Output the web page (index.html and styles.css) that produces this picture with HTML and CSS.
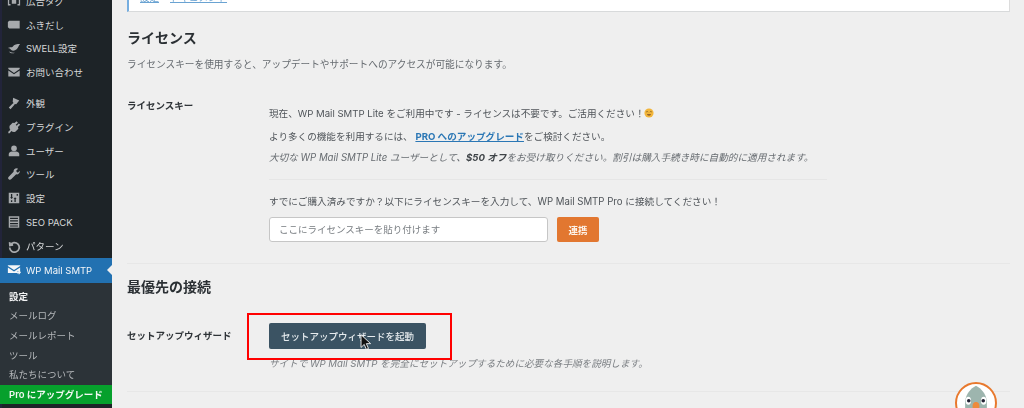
FILE: index.html
```html
<!DOCTYPE html>
<html lang="ja">
<head>
<meta charset="utf-8">
<title>WP Mail SMTP 設定</title>
<link rel="stylesheet" href="styles.css">
</head>
<body>
<div class="page">
  <aside class="sidebar">
    <ul class="menu">
      <li class="item item-clipped"><svg class="icon" viewBox="0 0 16 16"><path d="M1 3h3v1.500H2.500v7H4V13H1zM15 3h-3v1.500h1.500v7H12V13h3zM5.500 5h5v6h-5z"/></svg>広告タグ</li>
      <li class="item"><svg class="icon" viewBox="0 0 16 16"><path d="M2.500 3h12v9h-12l-1.500-1.500v-6z"/></svg>ふきだし</li>
      <li class="item"><svg class="icon" viewBox="0 0 16 16"><path d="M1 8c2 0 2.500 1 3.500 2 1.500 1.600 4.500 1.500 6.500-.5 2-2 2-4 4-6-3.500 0-7 .5-8.500 3C5.500 7.500 3 6.500 1 8zM2 12c2 2.500 5 2.500 7 1.500-2.500 0-4.500-.5-7-1.500z"/></svg>SWELL設定</li>
      <li class="item"><svg class="icon" viewBox="0 0 16 16"><path d="M1.500 3h13v1.500L8 9 1.500 4.500zM1.500 6.200 8 10.700l6.500-4.500V13h-13z"/></svg>お問い合わせ</li>
      <li class="item item-gap"><svg class="icon" viewBox="0 0 16 16"><path d="M7 2l7 3-3.500 4.500-1.500-.5-1 1.500L4 15l-2-2 4-4 1.500-1-1-1.500z"/></svg>外観</li>
      <li class="item"><svg class="icon" viewBox="0 0 16 16"><path d="M11 1.500l1.500 1.500-2.500 2.500 1 1 2.500-2.500L15 5.500l-2.500 2.500 .5 2-3.500 3.500c-2 .5-3.500 0-4.500-.8L3 15H1.500v-1.500l2.300-2.500c-.8-1-1.300-2.500-.8-4.500L6.500 3l2 .5z"/></svg>プラグイン</li>
      <li class="item"><svg class="icon" viewBox="0 0 16 16"><circle cx="8" cy="5" r="3.200"/><path d="M2 14v-2.500C2 9.500 4 8.500 5.500 8.500h5c1.500 0 3.500 1 3.500 3V14z"/></svg>ユーザー</li>
      <li class="item"><svg class="icon" viewBox="0 0 16 16"><path d="M11 1.500c-2 0-3.800 1.800-3.500 4L2 11c-1.200 1.200-.8 2.300 0 3 .8.800 2 .9 3-.2l5.500-5.400c2.300.5 4.400-1.400 4.200-4.100l-2.400 2.200-2-2 2.400-2.400c-.5-.3-1-.6-1.700-.6z"/></svg>ツール</li>
      <li class="item"><svg class="icon" viewBox="0 0 16 16"><path fill-rule="evenodd" d="M2 2h12v12H2zM4.500 3.500v3.500H3.500l1.800 2 1.700-2H6v-3.500zM10 12.500V9h1l-1.800-2-1.700 2h1v3.500zM11 3.500v2h1.500v-2zM4.500 10.500v2H6v-2z"/></svg>設定</li>
      <li class="item"><svg class="icon" viewBox="0 0 16 16"><path fill-rule="evenodd" d="M2 1.500h12v13H2zM3.500 3v1.500h9V3zM3.500 6v1.500h9V6zM3.500 9v1.500h9V9zM3.500 12v1h9v-1z"/></svg>SEO PACK</li>
      <li class="item"><svg class="icon icon-line" viewBox="0 0 16 16"><path d="M3 3.500 3.300 7.500 7 6.800M3.600 7A5.500 5.500 0 1 1 3 9.800"/></svg>パターン</li>
      <li class="item item-active"><svg class="icon icon-white" viewBox="0 0 16 16"><path d="M1 2.500h14v1L8 8 1 3.500zM1 5.200 8 9.700l7-4.500V9h-3v2.500H1zM12.500 9.500h1V8l2.500 2.700-2.500 2.800v-1.500h-2z"/></svg>WP Mail SMTP</li>
    </ul>
    <ul class="submenu">
      <li class="sub sub-current">設定</li>
      <li class="sub">メールログ</li>
      <li class="sub">メールレポート</li>
      <li class="sub">ツール</li>
      <li class="sub">私たちについて</li>
      <li class="sub sub-pro">Pro にアップグレード</li>
    </ul>
  </aside>

  <main class="main">
    <div class="notice"><span class="notice-links"><a>設定</a><a>ドキュメント</a></span></div>

    <section class="section section-license">
      <h2 class="heading">ライセンス</h2>
      <p class="desc">ライセンスキーを使用すると、アップデートやサポートへのアクセスが可能になります。</p>
      <div class="row row-license">
        <div class="label">ライセンスキー</div>
        <div class="field">
          <p class="line line-first">現在、WP Mail SMTP Lite をご利用中です - ライセンスは不要です。ご活用ください！<svg class="emoji" viewBox="0 0 12 12"><circle cx="6" cy="6" r="5.500" fill="#f2b53a"/><path d="M2.500 5c1-1 2-1 2.500 0M7 5c.5-1 1.500-1 2.500 0" fill="none" stroke="#7a5a20" stroke-width=".9"/><path d="M3.500 7.500h5C8 9.500 4 9.500 3.500 7.500z" fill="#7a4a20"/></svg></p>
          <p class="line line-second">より多くの機能を利用するには、 <a class="upgrade">PRO へのアップグレード</a>をご検討ください。</p>
          <p class="line line-italic">大切な WP Mail SMTP Lite ユーザーとして、<b>$50 オフ</b>をお受け取りください。割引は購入手続き時に自動的に適用されます。</p>
          <hr class="inner-rule">
          <p class="line">すでにご購入済みですか？以下にライセンスキーを入力して、WP Mail SMTP Pro に接続してください！</p>
          <div class="key-form">
            <input class="key-input" type="text" placeholder="ここにライセンスキーを貼り付けます">
            <button class="btn-orange" type="button">連携</button>
          </div>
        </div>
      </div>
    </section>

    <section class="section section-connect">
      <h2 class="heading">最優先の接続</h2>
      <div class="row row-wizard">
        <div class="label">セットアップウィザード</div>
        <div class="field">
          <button class="btn-slate" type="button">セットアップウィザードを起動</button>
          <p class="note">サイトで WP Mail SMTP を完全にセットアップするために必要な各手順を説明します。</p>
        </div>
      </div>
    </section>
  </main>

  <div class="annotation"></div>
  <svg class="cursor" viewBox="0 0 16 24"><path d="M1 1v18l4.500-4.300 3 7 3-1.300-3-6.800h6z" fill="#111" stroke="#fff" stroke-width="1.200" stroke-linejoin="round"/></svg>
  <div class="mascot">
    <svg viewBox="0 0 42 42"><path d="M21 2c-6 3-11 9-12 17v23h24V19C32 11 27 5 21 2z" fill="#9db5ae"/><ellipse cx="12.500" cy="18.500" rx="3" ry="4.500" fill="#fff"/><ellipse cx="29.500" cy="18.500" rx="3" ry="4.500" fill="#fff"/><circle cx="13" cy="18.500" r="2" fill="#223"/><circle cx="29" cy="18.500" r="2" fill="#223"/><path d="M21 20c3 0 4.500 3 3.500 7h-7c-1-4 .5-7 3.500-7z" fill="#ee8a3c"/></svg>
  </div>
</div>
</body>
</html>
```
FILE: styles.css
```css
* { box-sizing: border-box; }
html, body { margin: 0; height: 408px; overflow: hidden; }
body {
  background: #efefef;
  font-family: Inter, "Noto Sans CJK JP", sans-serif;
  font-size: 9.5px;
  color: #3c434a;
}
.page {
  position: relative;
  display: flex;
  width: 1024px;
  height: 408px;
  overflow: hidden;
  filter: blur(0.55px);
}
p, h2, ul { margin: 0; padding: 0; }
ul { list-style: none; }

/* sidebar */
.sidebar {
  flex: 0 0 112px;
  height: 408px;
  background: #1d2327;
  box-shadow: inset 2px 0 0 #22243a;
}
.menu { margin-top: -11px; }
.item {
  display: flex;
  align-items: center;
  gap: 5px;
  height: 23.800px;
  padding-left: 7px;
  color: #d6d8d9;
  white-space: nowrap;
}
.item-gap { margin-top: 7px; }
.item-active {
  position: relative;
  height: 25px;
  background: #2271b1;
  color: #f4f6f8;
}
.item-active::after {
  content: "";
  position: absolute;
  right: 0;
  top: 7px;
  border: 5.500px solid transparent;
  border-right-color: #efefef;
  border-left-width: 0;
}
.icon { flex: 0 0 14px; width: 14px; height: 14px; fill: #a7aaad; }
.icon-line { fill: none; stroke: #a7aaad; stroke-width: 2; }
.icon-white { fill: #f4f6f8; }
.submenu { background: #2c3338; height: 121px; padding-top: 4px; }
.sub {
  height: 19.600px;
  line-height: 19.600px;
  padding-left: 9px;
  color: #b4b7ba;
  white-space: nowrap;
}
.sub-current { color: #f3f4f5; font-weight: 700; }
.sub-pro {
  background: #06a02c;
  color: #f2f8f3;
  font-weight: 600;
}

/* main */
.main { flex: 1; padding: 0 14px 0 15px; min-width: 0; }
.notice {
  height: 12px;
  background: #fff;
  border-left: 2px solid #76aee0;
  border-bottom: 1px solid #d8dadb;
  border-right: 1px solid #dcdcdc;
  overflow: hidden;
}
.notice-links { display: flex; gap: 11px; margin-top: -10px; padding-left: 11px; }
.notice-links a { color: #6aa3d2; text-decoration: underline; }
.heading {
  font-size: 14px;
  line-height: 20px;
  font-weight: 700;
  color: #2b3034;
}
.section-license { padding-top: 16px; padding-bottom: 20.500px; border-bottom: 1px solid #e7e7e7; }
.section-connect { padding-top: 13px; height: 128px; border-bottom: 1px solid #e7e7e7; }
.desc { margin-top: 10px; line-height: 14px; font-size: 9.680px; color: #666b70; }
.row { display: grid; grid-template-columns: 142px 1fr; }
.row-license { margin-top: 27px; }
.row-wizard { margin-top: 26px; }
.label { font-weight: 700; color: #2f3438; line-height: 14px; }
.row-wizard .label { line-height: 20px; margin-top: 3px; }
.field { min-width: 0; }
.row-license .field { padding-top: 8px; }
.line { line-height: 14px; margin-bottom: 8px; font-size: 9.650px; color: #4f5459; white-space: nowrap; }
.line-first { margin-bottom: 9px; font-size: 9.600px; }
.line-second { margin-bottom: 7px; font-size: 9.600px; }
.line-italic { font-style: italic; color: #666b70; margin-bottom: 0; }
.line-italic b { color: #3f4448; }
.upgrade { color: #2b77b5; font-weight: 700; text-decoration: underline; }
.emoji { width: 10px; height: 10px; vertical-align: -1px; }
.inner-rule { width: 558px; margin: 14px 0 15px; border: 0; border-top: 1px solid #e6e6e6; }
.key-form { display: flex; gap: 9px; margin-top: 1px; }
.key-input {
  width: 279px;
  height: 25px;
  padding: 0 9px;
  background: #fff;
  border: 1px solid #c6c6c6;
  border-radius: 3px;
  font: inherit;
}
.key-input::placeholder { color: #777c80; opacity: 1; }
.btn-orange {
  width: 42px;
  height: 25px;
  border: 0;
  border-radius: 2px;
  background: #e27730;
  color: #fdf3ea;
  font: inherit;
  font-weight: 600;
}
.btn-slate {
  display: block;
  width: 157px;
  height: 26px;
  border: 0;
  border-radius: 2px;
  background: #3b5363;
  color: #e6ebee;
  font: inherit;
  font-weight: 500;
}
.note { margin-top: 8px; line-height: 14px; font-size: 9.600px; font-style: italic; color: #7b7f83; white-space: nowrap; }

/* overlays */
.annotation {
  position: absolute;
  left: 247px;
  top: 313px;
  width: 205px;
  height: 47px;
  border: 2px solid #f00;
}
.cursor { position: absolute; left: 360px; top: 334px; width: 12px; height: 17px; }
.mascot {
  position: absolute;
  left: 955px;
  top: 382px;
  width: 42px;
  height: 42px;
  background: #fff;
  border: 2.500px solid #e8792e;
  border-radius: 50%;
  overflow: hidden;
}
.mascot svg { display: block; width: 100%; height: 100%; }
```
